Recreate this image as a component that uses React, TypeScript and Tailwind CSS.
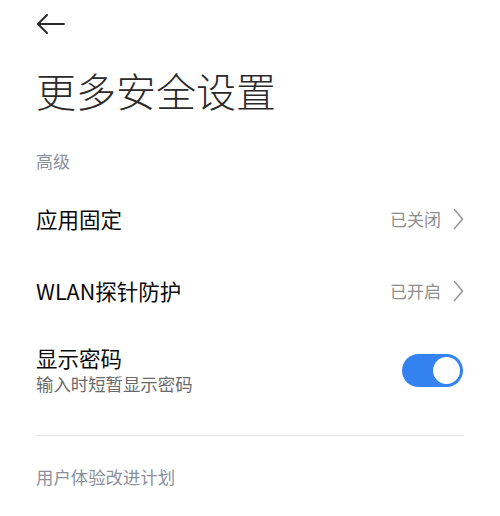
import React from "react";

const font = { fontFamily: '"Noto Sans CJK SC", "Noto Sans", sans-serif' };

function Chevron() {
  return (
    <svg width="11" height="22" viewBox="0 0 11 22" fill="none" className="ml-[12px]">
      <path d="M1.5 1.5 L9.5 11 L1.5 20.5" stroke="#9a9a9a" strokeWidth="1.6" strokeLinecap="round" strokeLinejoin="round" />
    </svg>
  );
}

function NavRow({ title, value }: { title: string; value: string }) {
  return (
    <div className="flex h-[72px] items-center justify-between">
      <span className="text-[21.5px] leading-[26px] text-[#0a0a0a]">{title}</span>
      <div className="flex items-center">
        <span className="text-[17px] leading-[22px] text-[#8f8f8f]">{value}</span>
        <Chevron />
      </div>
    </div>
  );
}

export default function App() {
  return (
    <div className="w-[500px] h-[516px] bg-white overflow-hidden px-9" style={font}>
      <div className="flex h-12 items-center">
        <svg width="29" height="22" viewBox="0 0 29 22" fill="none">
          <path d="M28 11 H2" stroke="#2a2a2a" strokeWidth="2" strokeLinecap="round" />
          <path d="M11 2 L2 11 L11 20" stroke="#2a2a2a" strokeWidth="2" strokeLinecap="round" strokeLinejoin="round" />
        </svg>
      </div>
      <div className="h-[84px] text-[40px] leading-[84px] font-light text-[#2a2a2a]">更多安全设置</div>
      <div className="h-[51px] pt-[18px] text-[17px] leading-[22px] text-[#8b909b]">高级</div>
      <NavRow title="应用固定" value="已关闭" />
      <NavRow title="WLAN探针防护" value="已开启" />
      <div className="flex h-[87px] items-center justify-between">
        <div className="flex flex-col">
          <span className="text-[21.5px] leading-[26px] text-[#0a0a0a]">显示密码</span>
          <span className="text-[17.4px] leading-[25px] text-[#6b6b6b]">输入时短暂显示密码</span>
        </div>
        <div className="mr-[1px] flex h-[33px] w-[61px] items-center justify-end rounded-full bg-[#3482f0] pr-[3px]">
          <div className="h-[27px] w-[27px] rounded-full bg-white" />
        </div>
      </div>
      <div className="mt-[21px] border-t border-[#e6e6e6]" />
      <div className="pt-[30px] text-[17.4px] leading-[22px] text-[#8b909b]">用户体验改进计划</div>
    </div>
  );
}
